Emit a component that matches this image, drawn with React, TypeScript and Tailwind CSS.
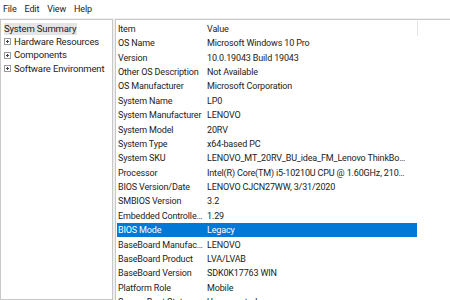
import React from 'react';

const rows: [string, string][] = [
  ['OS Name', 'Microsoft Windows 10 Pro'],
  ['Version', '10.0.19043 Build 19043'],
  ['Other OS Description', 'Not Available'],
  ['OS Manufacturer', 'Microsoft Corporation'],
  ['System Name', 'LP0'],
  ['System Manufacturer', 'LENOVO'],
  ['System Model', '20RV'],
  ['System Type', 'x64-based PC'],
  ['System SKU', 'LENOVO_MT_20RV_BU_idea_FM_Lenovo ThinkBook 14-IML'],
  ['Processor', 'Intel(R) Core(TM) i5-10210U CPU @ 1.60GHz, 2101 Mhz, 4 Core(s)'],
  ['BIOS Version/Date', 'LENOVO CJCN27WW, 3/31/2020'],
  ['SMBIOS Version', '3.2'],
  ['Embedded Controller Version', '1.29'],
  ['BIOS Mode', 'Legacy'],
  ['BaseBoard Manufacturer', 'LENOVO'],
  ['BaseBoard Product', 'LVA/LVAB'],
  ['BaseBoard Version', 'SDK0K17763 WIN'],
  ['Platform Role', 'Mobile'],
  ['Secure Boot State', 'Unsupported'],
];

const PlusBox = () => (
  <svg width="7" height="7" viewBox="0 0 7 7" className="shrink-0">
    <rect x="0.5" y="0.5" width="6" height="6" fill="white" stroke="#9a9a9a" />
    <path d="M2 3.5h3M3.5 2v3" stroke="#444" strokeWidth="1" />
  </svg>
);

const TreeItem = ({ label }: { label: string }) => (
  <div className="flex items-center h-[13.5px] pl-[3px] gap-[3px]">
    <PlusBox />
    <span className="whitespace-nowrap">{label}</span>
  </div>
);

export default function App() {
  return (
    <div
      className="w-[450px] h-[300px] overflow-hidden bg-white flex flex-col text-[9px] leading-[12px] tracking-[-0.15px] text-[#222]"
      style={{ fontFamily: 'Roboto, "Noto Sans", sans-serif' }}
    >
      <div className="h-[18px] flex items-center gap-[8px] pl-[3px] pb-[1px]">
        <span>File</span>
        <span>Edit</span>
        <span>View</span>
        <span>Help</span>
      </div>
      <div className="flex-1 flex bg-[#f0f0f0] pt-[1px] min-h-0">
        <div className="w-[113px] border border-[#c8c8c8] bg-white pt-[2px] shrink-0 text-[9.5px]">
          <div className="flex items-center h-[13px] pl-[3px]">
            <span className="bg-[#e5e5e5] pr-[1px] whitespace-nowrap">System Summary</span>
          </div>
          <TreeItem label="Hardware Resources" />
          <TreeItem label="Components" />
          <TreeItem label="Software Environment" />
        </div>
        <div className="flex-1 ml-[2px] border-l border-t border-[#c8c8c8] bg-white pl-[1px] pt-[1px] min-w-0">
          <div className="flex h-[15px] items-center">
            <div className="w-[89px] pl-[1px]">Item</div>
            <div className="w-[211px] pl-[1px]">Value</div>
            <div className="w-px h-full bg-[#e5e5e5]" />
          </div>
          {rows.map(([k, v]) => {
            const sel = k === 'BIOS Mode';
            return (
              <div
                key={k}
                className={`flex h-[14.4px] items-center w-[300px] ${sel ? 'bg-[#0078d7] text-white' : ''}`}
              >
                <div className="w-[89px] pl-[1px] pr-[3px] truncate">{k}</div>
                <div className="w-[211px] pl-[1px] pr-[8px] truncate">{v}</div>
              </div>
            );
          })}
        </div>
      </div>
    </div>
  );
}
